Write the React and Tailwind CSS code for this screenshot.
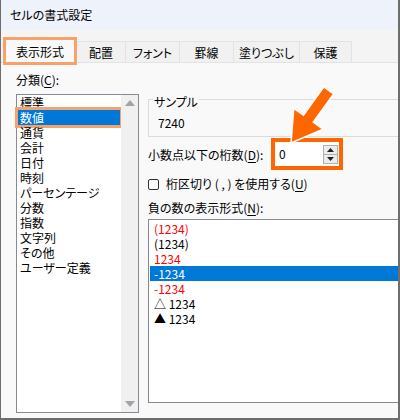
import React from "react";

const font = "font-['Noto_Sans_CJK_JP',sans-serif] [font-feature-settings:'palt']";

function U({ c }) {
  return <span className="underline underline-offset-2">{c}</span>;
}

const cats = ["標準", "数値", "通貨", "会計", "日付", "時刻", "パーセンテージ", "分数", "指数", "文字列", "その他", "ユーザー定義"];

const negs = [
  { t: "(1234)", red: true },
  { t: "(1234)" },
  { t: "1234", red: true },
  { t: "-1234", sel: true },
  { t: "-1234", red: true },
  { t: "△ 1234" },
  { t: "▲ 1234" },
];

const tabs = [
  { t: "配置", w: "w-[49px]" },
  { t: "フォント", w: "w-[54px]" },
  { t: "罫線", w: "w-[54px]" },
  { t: "塗りつぶし", w: "w-[66px]" },
  { t: "保護", w: "w-[52px]" },
];

export default function App() {
  return (
    <div className={`relative w-[400px] h-[420px] overflow-hidden bg-[#f9f9f9] border-r-2 border-b-2 border-l border-[#6e6e6e] text-[12px] text-black ${font}`}>
      {/* title bar */}
      <div className="h-[30px] bg-[#eef2fa] flex items-center pl-[9px] text-[12px]">セルの書式設定</div>
      {/* tab strip */}
      <div className="h-[33px] bg-[#f4f4f4] border-b border-[#e3e3e3] flex items-end pl-[2px]">
        <div className="relative z-10 -mb-[3px] w-[74px] h-[28px] border-[3px] border-[#f7a26a] bg-[#f9f9f9] flex items-center justify-center leading-none pt-[2px]">
          表示形式
        </div>
        {tabs.map((tb) => (
          <div key={tb.t} className={`${tb.w} h-[21px] border-t border-r border-[#e3e3e3] bg-[#f1f1f1] flex items-center justify-center leading-none pt-[2px]`}>
            {tb.t}
          </div>
        ))}
      </div>
      {/* content */}
      <div className="flex">
        {/* left column */}
        <div className="ml-[15px] w-[123px] pt-[8px]">
          <div className="leading-[18px]">分類(<U c="C" />):</div>
          <div className="mt-[5px] h-[319px] border border-[#868a94] bg-white flex">
            <div className="flex-1 flex flex-col">
              {cats.map((c) => (
                <div
                  key={c}
                  className={
                    c === "数値"
                      ? "ml-[1px] mr-[1px] pl-[2px] leading-[15px] bg-[#0078d7] text-white outline-[3px] outline-solid outline-[#f7a26a]"
                      : "pl-[3px] leading-[15px]"
                  }
                >
                  {c}
                </div>
              ))}
            </div>
            <div className="w-[17px] bg-[#f0f0f0] flex flex-col justify-between items-center py-[5px]">
              <svg width="10" height="6" viewBox="0 0 10 6"><polygon points="5,0 10,6 0,6" fill="#a3a3a3" /></svg>
              <svg width="10" height="6" viewBox="0 0 10 6"><polygon points="0,0 10,0 5,6" fill="#a3a3a3" /></svg>
            </div>
          </div>
        </div>
        {/* right column */}
        <div className="ml-[9px] flex-1 flex flex-col">
          <div className="relative mt-[36px] h-[38px] border-t border-l border-b border-[#dcdcdc] pl-[9px] pt-[15px]">
            <span className="absolute -top-[6px] left-[4px] bg-[#f9f9f9] px-[1px] leading-[15px]">サンプル</span>
            <div className="leading-[15px]">7240</div>
          </div>
          <div className="mt-[1px] flex items-center">
            <div className="w-[123px] leading-[18px] pt-[2px]">小数点以下の桁数(<U c="D" />):</div>
            <div className="w-[72px] h-[32px] border-[4px] border-[#ff6600] bg-white flex items-center justify-between">
              <span className="pl-[4px] leading-none">0</span>
              <div className="mr-[1px] w-[15px] h-[19px] flex flex-col border border-[#b0b0b0]">
                <div className="flex-1 bg-[#ececec] border-b border-[#b0b0b0] flex items-center justify-center">
                  <svg width="7" height="4" viewBox="0 0 7 4"><polygon points="3.5,0 7,4 0,4" fill="#222" /></svg>
                </div>
                <div className="flex-1 bg-[#ececec] flex items-center justify-center">
                  <svg width="7" height="4" viewBox="0 0 7 4"><polygon points="0,0 7,0 3.5,4" fill="#222" /></svg>
                </div>
              </div>
            </div>
          </div>
          <div className="mt-[5px] flex items-center leading-[18px]">
            <div className="w-[11px] h-[11px] border border-[#333] rounded-[2px] bg-white mr-[7px]" />
            <span>桁区切り ( , ) を使用する(<U c="U" />)</span>
          </div>
          <div className="mt-[6px] leading-[18px]">負の数の表示形式(<U c="N" />):</div>
          <div className="mt-[2px] h-[184px] border border-r-0 border-[#868a94] bg-white pt-[1px] pl-[1px]">
            {negs.map((n, i) => (
              <div
                key={i}
                className={`pl-[4px] leading-[15px] ${n.sel ? "bg-[#0078d7] text-white" : n.red ? "text-[#ff0000]" : ""}`}
              >
                {n.t}
              </div>
            ))}
          </div>
        </div>
      </div>
      {/* annotation arrow */}
      <svg className="absolute left-0 top-0 pointer-events-none" width="400" height="420">
        <polygon
          points="290,143 292.8,108.3 302.5,115.2 322.8,86.9 332.6,93.9 312.3,122.2 322,129.1"
          fill="#ff6600"
          stroke="#ffffff"
          strokeWidth="1.5"
          strokeLinejoin="miter"
        />
      </svg>
    </div>
  );
}
